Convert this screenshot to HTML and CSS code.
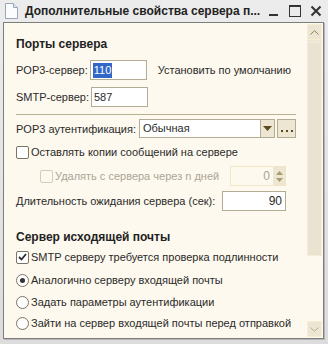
FILE: index.html
```html
<html>
  <head>
    <title>Дополнительные свойства сервера</title>
    <link rel="stylesheet" href="styles.css">
  </head>
  <body>
    <div class="window">
      <div class="titlebar">
        <svg class="docicon" width="13" height="16" viewBox="0 0 13 16">
          <path d="M0.5 0.5 H8.5 L12.5 4.5 V15.5 H0.5 Z" fill="#fbfcfe" stroke="#9aa7b8"/>
          <path d="M8.5 0.5 V4.5 H12.5" fill="#e3e8ef" stroke="#9aa7b8"/>
        </svg>
        <span class="title">Дополнительные свойства сервера п...</span>
        <div class="winbtns">
          <svg width="12" height="12" viewBox="0 0 12 12"><rect x="1" y="9" width="9" height="2" fill="#333"/></svg>
          <svg width="12" height="12" viewBox="0 0 12 12"><rect x="0.5" y="0.5" width="11" height="11" fill="none" stroke="#333"/><rect x="1" y="1" width="10" height="1" fill="#333"/></svg>
          <svg width="12" height="12" viewBox="0 0 12 12"><path d="M1.5 1.5 L10.5 10.5 M10.5 1.5 L1.5 10.5" stroke="#333" stroke-width="2"/></svg>
        </div>
      </div>

      <div class="client">
        <div class="content">
          <div class="heading h-first">Порты сервера</div>

          <div class="row r-pop3">
            <label class="lbl">POP3-сервер:</label>
            <div class="field port"><span class="sel">110</span></div>
            <span class="link">Установить по умолчанию</span>
          </div>

          <div class="row r-smtp">
            <label class="lbl">SMTP-сервер:</label>
            <div class="field port">587</div>
          </div>

          <div class="sep"></div>

          <div class="row r-auth">
            <label class="lbl lbl-auth">POP3 аутентификация:</label>
            <div class="combo">
              <div class="combo-text">Обычная</div>
              <div class="combo-btn">
                <svg width="9" height="5" viewBox="0 0 9 5"><path d="M0 0 H9 L4.5 5 Z" fill="#5b4a1e"/></svg>
              </div>
            </div>
            <div class="dots-btn">
              <svg width="12" height="2" viewBox="0 0 12 2"><rect x="0" y="0" width="2" height="2" fill="#5b4a1e"/><rect x="5" y="0" width="2" height="2" fill="#5b4a1e"/><rect x="10" y="0" width="2" height="2" fill="#5b4a1e"/></svg>
            </div>
          </div>

          <div class="row r-keep">
            <span class="check"></span>
            <span>Оставлять копии сообщений на сервере</span>
          </div>

          <div class="row r-del">
            <span class="check disabled"></span>
            <span class="dim">Удалять с сервера через n дней</span>
            <div class="spin">
              <div class="spin-val">0</div>
              <div class="spin-btns">
                <svg width="7" height="4" viewBox="0 0 7 4"><path d="M0 4 H7 L3.5 0 Z" fill="#a89a72"/></svg>
                <svg width="7" height="4" viewBox="0 0 7 4"><path d="M0 0 H7 L3.5 4 Z" fill="#a89a72"/></svg>
              </div>
            </div>
          </div>

          <div class="row r-wait">
            <label class="lbl">Длительность ожидания сервера (сек):</label>
            <div class="field num">90</div>
          </div>

          <div class="heading h-second">Сервер исходящей почты</div>

          <div class="row r-smtpauth">
            <span class="check checked">
              <svg width="9" height="8" viewBox="0 0 9 8"><path d="M1 4 L3.5 6.5 L8 1" fill="none" stroke="#2b2b2b" stroke-width="1.8"/></svg>
            </span>
            <span>SMTP серверу требуется проверка подлинности</span>
          </div>

          <div class="row r-radio1">
            <span class="radio on"></span>
            <span>Аналогично серверу входящей почты</span>
          </div>

          <div class="row r-radio2">
            <span class="radio"></span>
            <span>Задать параметры аутентификации</span>
          </div>

          <div class="row r-radio3">
            <span class="radio"></span>
            <span>Зайти на сервер входящей почты перед отправкой</span>
          </div>
        </div>

        <div class="scrollbar">
          <div class="sb-btn">
            <svg width="9" height="5" viewBox="0 0 9 5"><path d="M0.5 4.5 L4.5 0.8 L8.5 4.5" fill="none" stroke="#8c7d55"/></svg>
          </div>
          <div class="sb-thumb"></div>
          <div class="sb-track"></div>
          <div class="sb-btn">
            <svg width="9" height="5" viewBox="0 0 9 5"><path d="M0.5 0.5 L4.5 4.2 L8.5 0.5" fill="none" stroke="#b8ad90"/></svg>
          </div>
        </div>
      </div>
    </div>
  </body>
</html>
```

FILE: styles.css
```css
body {
  margin: 0;
  font-family: "Liberation Sans", Arial, sans-serif;
  font-size: 11px;
  color: #2a2a2a;
}

.window {
  width: 328px;
  height: 344px;
  background: linear-gradient(#ececec, #dcdcdc);
  display: flex;
  flex-direction: column;
}

.titlebar {
  height: 22px;
  display: flex;
  align-items: center;
  padding: 0 6px 0 5px;
}
.docicon {
  margin-right: 7px;
}
.title {
  font-size: 12px;
  font-weight: bold;
  color: #222;
  flex: 1;
  white-space: nowrap;
}
.winbtns {
  display: flex;
  gap: 9px;
  align-items: center;
}

.client {
  flex: 1;
  margin: 0 4px 5px 3px;
  border: 1px solid #7d7d7d;
  background: #fdf9ee;
  display: flex;
  box-shadow: 1px 1px 0 #b5b5b5;
}

.content {
  flex: 1;
  min-width: 0;
  padding: 0 11px 0 12px;
  display: flex;
  flex-direction: column;
}

.heading {
  font-size: 12px;
  font-weight: bold;
  height: 20px;
  line-height: 20px;
  color: #222;
}
.h-first {
  margin-top: 11px;
}
.h-second {
  margin-top: 16px;
}

.row {
  display: flex;
  align-items: center;
  height: 20px;
  white-space: nowrap;
}
.r-pop3 { margin-top: 6px; }
.r-smtp { margin-top: 7px; }
.r-auth { margin-top: 4px; height: 19px; }
.r-keep { margin-top: 4px; }
.r-del { margin-top: 4px; }
.r-wait { margin-top: 5px; }
.r-smtpauth { margin-top: 0; }
.r-radio1 { margin-top: 3px; }
.r-radio2 { margin-top: 2px; }
.r-radio3 { margin-top: 1px; }

.lbl {
  margin-right: 2px;
}
.lbl-auth {
  margin-right: 3px;
}

.field {
  border: 1px solid #b3ac95;
  background: #fff;
  display: flex;
  align-items: center;
  padding: 0 3px 0 2px;
  box-sizing: border-box;
  height: 20px;
}
.port {
  width: 57px;
}
.sel {
  background: #3367c7;
  color: #fff;
  padding: 0 1px;
  line-height: 15px;
}
.link {
  margin-left: 11px;
}
.num {
  width: 64px;
  justify-content: flex-end;
  margin-left: auto;
  margin-right: 10px;
  font-size: 12px;
}

.sep {
  height: 1px;
  background: #b9b193;
  margin: 7px 0 0 0;
}

.combo {
  display: flex;
  flex: 1;
  height: 19px;
  border: 1px solid #b3ac95;
  box-sizing: border-box;
  background: #fff;
}
.combo-text {
  flex: 1;
  padding-left: 3px;
  line-height: 17px;
}
.combo-btn {
  width: 13px;
  background: #ede6d3;
  border-left: 1px solid #b3ac95;
  display: flex;
  align-items: center;
  justify-content: center;
}
.dots-btn {
  width: 19px;
  height: 19px;
  box-sizing: border-box;
  border: 1px solid #b3ac95;
  background: #ede6d3;
  margin-left: 2px;
  display: flex;
  align-items: flex-end;
  justify-content: center;
  padding-bottom: 5px;
}

.check {
  width: 13px;
  height: 13px;
  box-sizing: border-box;
  border: 1px solid #7a7466;
  border-radius: 2px;
  background: #fff;
  margin-right: 2px;
  display: flex;
  align-items: center;
  justify-content: center;
}
.check.disabled {
  border-color: #d2ccb9;
  background: #fdf9ee;
  margin-left: 24px;
}
.dim {
  color: #aba597;
}

.spin {
  display: flex;
  width: 56px;
  height: 20px;
  box-sizing: border-box;
  border: 1px solid #f1e7c6;
  margin-left: auto;
  margin-right: 10px;
}
.spin-val {
  flex: 1;
  text-align: right;
  padding-right: 3px;
  line-height: 18px;
  color: #a8a294;
  font-size: 12px;
}
.spin-btns {
  width: 12px;
  background: #ede6d3;
  display: flex;
  flex-direction: column;
  align-items: center;
  justify-content: space-around;
  padding: 2px 0;
}

.radio {
  width: 13px;
  height: 13px;
  box-sizing: border-box;
  border: 1px solid #7a7466;
  border-radius: 50%;
  background: #fff;
  margin-right: 2px;
  display: flex;
  align-items: center;
  justify-content: center;
}
.radio.on::after {
  content: "";
  width: 5px;
  height: 5px;
  border-radius: 50%;
  background: #333;
}

.scrollbar {
  width: 15px;
  margin: 1px 1px 1px 0;
  background: #ede7d8;
  display: flex;
  flex-direction: column;
}
.sb-btn {
  height: 16px;
  border: 1px solid #f6edd2;
  box-sizing: border-box;
  display: flex;
  align-items: center;
  justify-content: center;
  background: #ece5d3;
}
.sb-thumb {
  height: 212px;
  margin-top: 2px;
  background: #ebe3d2;
  border: 1px solid #f4ecd6;
}
.sb-track {
  flex: 1;
  background: #fdf9ee;
}
```
